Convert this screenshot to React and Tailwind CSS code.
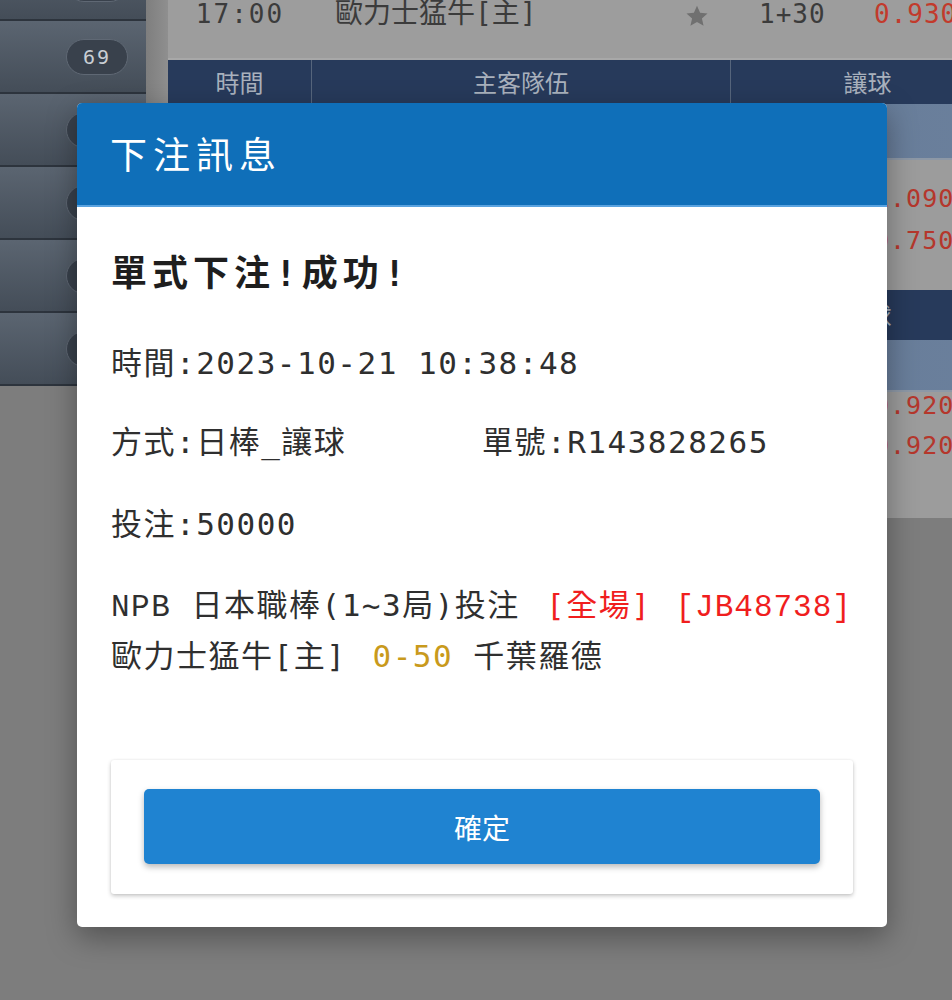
import React from "react";

const mono = "font-['DejaVu_Sans_Mono','Noto_Sans_CJK_TC',monospace]";
const cjk = "font-['Noto_Sans_CJK_TC','Noto_Sans',sans-serif]";
const lmono = "font-['Liberation_Mono','Noto_Sans_CJK_TC',monospace]";

function SideRow({ badge }) {
  return (
    <div className="h-[73px] shrink-0 flex items-center justify-end pr-[18px] bg-gradient-to-b from-[#5b6571] to-[#444d58] border-b-2 border-[#2d343d]">
      <div className={`w-[62px] h-[36px] rounded-full bg-[#39414c] border border-[#5f6874] flex items-center justify-center text-[20px] tracking-[2px] text-[#c9ced4] ${mono}`}>
        {badge}
      </div>
    </div>
  );
}

function HeaderRow({ tall }) {
  return (
    <div className={`${tall ? "h-[50px]" : "h-[44px]"} grid grid-cols-[144px_419px_273px] bg-[#273a5b] text-[#a9b1bd] text-[24px] ${cjk}`}>
      <div className="flex items-center justify-center border-r border-[#56657c]">時間</div>
      <div className="flex items-center justify-center border-r border-[#56657c]">主客隊伍</div>
      <div className="flex items-center justify-center">讓球</div>
    </div>
  );
}

function OddsBlock({ a, b, second }) {
  return (
    <>
      <div className={`${second ? "h-[52px]" : "h-[56px]"} bg-gradient-to-r from-[#5a7090] to-[#6b809c] border-b-2 border-[#8d98a6]`} />
      <div className={`${second ? "h-[126px]" : "h-[130px]"} bg-[#9c9c9c] grid grid-cols-[144px_419px_273px]`}>
        <div />
        <div />
        <div className={`flex flex-col pl-[143px] ${second ? "pt-[2px] gap-[16px] leading-[24px]" : "pt-[24px] gap-[12px] leading-[30px]"} text-[25px] text-[#b5372c] tracking-[1px] ${mono}`}>
          <span>{a}</span>
          <span>{b}</span>
        </div>
      </div>
    </>
  );
}

export default function App() {
  return (
    <div className="relative w-[952px] h-[1000px] overflow-hidden bg-[#7d7d7d]">
      <div className="flex items-start">
        {/* sidebar */}
        <div className="w-[146px] shrink-0 flex flex-col -mt-[52px] bg-[#878787]">
          <SideRow badge="" />
          <SideRow badge="69" />
          <SideRow badge="" />
          <SideRow badge="" />
          <SideRow badge="" />
          <SideRow badge="" />
        </div>
        <div className="w-[22px] shrink-0 h-[388px] bg-gradient-to-r from-[#7e7e7e] to-[#8f8f8f]" />
        {/* content */}
        <div className="w-[836px] shrink-0 flex flex-col">
          <div className="h-[60px] bg-[#9d9d9d] border-b-2 border-[#a8a8a8] grid grid-cols-[144px_419px_273px]">
            <div className={`flex justify-center pt-[1px] text-[26px] leading-[26px] tracking-[2px] text-[#3b3b3b] ${mono}`}>17:00</div>
            <div className="relative flex items-start pl-[23px]">
              <span className={`text-[28px] leading-[28px] text-[#3b3b3b] ${mono}`}>歐力士猛牛[主]</span>
              <svg className="absolute left-[373px] top-[4px]" width="24" height="24" viewBox="0 0 24 24">
                <path d="M12 1.8l3.1 6.9 7.4.7-5.6 5 1.7 7.3L12 17.9l-6.6 3.8 1.7-7.3-5.6-5 7.4-.7z" fill="#707070" />
              </svg>
            </div>
            <div className={`flex items-start pt-[1px] text-[26px] leading-[26px] tracking-[1px] ${mono}`}>
              <span className="w-[143px] pl-[28px] text-[#3b3b3b]">1+30</span>
              <span className="text-[#c23a2c]">0.930</span>
            </div>
          </div>
          <HeaderRow />
          <OddsBlock a="1.090" b="0.750" />
          <HeaderRow tall />
          <OddsBlock a="0.920" b="0.920" second />
        </div>
      </div>

      {/* dialog */}
      <div className="absolute left-[77px] top-[103px] w-[810px] rounded-[5px] overflow-hidden bg-white shadow-[0_10px_30px_rgba(0,0,0,0.35)]">
        <div className="h-[104px] bg-[#0f6fb9] border-b-2 border-[#5aa3e0] flex items-center px-[33px]">
          <span className={`text-[37px] tracking-[6px] text-white ${cjk}`}>下注訊息</span>
        </div>
        <div className={`px-[34px] pb-[33px] text-[#2f2f2f] ${mono}`}>
          <div className="mt-[45px] text-[36px] leading-[44px] font-bold tracking-[5px] text-[#1e1e1e]">單式下注!成功!</div>
          <div className="mt-[47px] text-[31px] leading-[40px] tracking-[1.5px]">時間:2023-10-21 10:38:48</div>
          <div className="mt-[39px] flex text-[31px] leading-[40px] tracking-[1.5px]">
            <span className="w-[371px] shrink-0">方式:日棒_讓球</span>
            <span>單號:R143828265</span>
          </div>
          <div className="mt-[42px] text-[31px] leading-[40px] tracking-[1.5px]">投注:50000</div>
          <div className="mt-[37px] text-[31px] leading-[48px] tracking-[1.5px]">
            <div className="whitespace-pre">
              <span className={lmono}>NPB</span>
              <span> 日本職棒(1~3局)投注 </span>
              <span className="ml-[6px] text-[#f01e1e]">[全場]</span>
              <span> </span>
              <span className={`${lmono} ml-[4px] text-[#f01e1e] tracking-[1px]`}>[JB48738]</span>
            </div>
            <div className="whitespace-pre">
              <span>歐力士猛牛[主] </span>
              <span className="ml-[6px] text-[#c99a1c]">0-50</span>
              <span> 千葉羅德</span>
            </div>
          </div>
          <div className="mt-[80px] h-[134px] bg-white rounded-[3px] shadow-[0_2px_4px_rgba(0,0,0,0.22),0_0_2px_rgba(0,0,0,0.08)] px-[33px] pt-[29px]">
            <button className={`w-full h-[75px] rounded-[5px] bg-[#1f83d1] text-white text-[28px] shadow-[0_3px_6px_rgba(0,0,0,0.28)] ${cjk}`}>
              確定
            </button>
          </div>
        </div>
      </div>
    </div>
  );
}
